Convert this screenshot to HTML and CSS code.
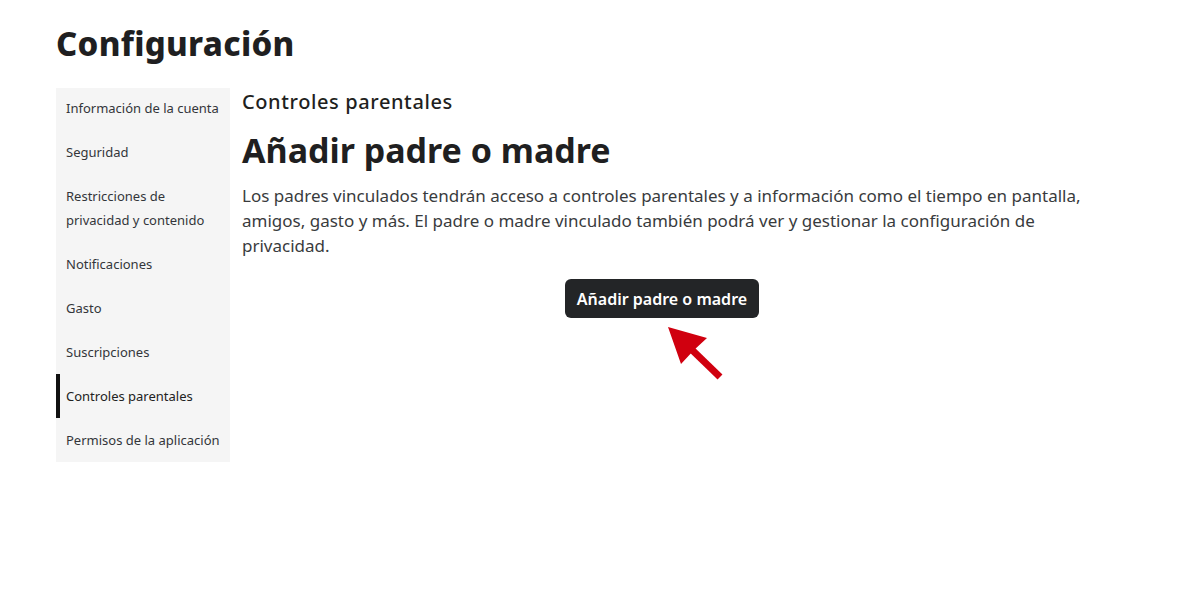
FILE: index.html
```html
<!DOCTYPE html>
<html lang="es">
<head>
    <meta charset="UTF-8">
    <title>Configuración</title>
    <link rel="stylesheet" href="styles.css">
</head>
<body>
    <div class="page">
        <h1 class="page-title">Configuración</h1>

        <div class="settings">
            <ul class="menu">
                <li class="menu-item">Información de la cuenta</li>
                <li class="menu-item">Seguridad</li>
                <li class="menu-item">Restricciones de<br>privacidad y contenido</li>
                <li class="menu-item">Notificaciones</li>
                <li class="menu-item">Gasto</li>
                <li class="menu-item">Suscripciones</li>
                <li class="menu-item active">Controles parentales</li>
                <li class="menu-item">Permisos de la aplicación</li>
            </ul>

            <div class="content">
                <h3 class="section-title">Controles parentales</h3>
                <h2 class="content-title">Añadir padre o madre</h2>
                <p class="content-text">Los padres vinculados tendrán acceso a controles parentales y a información como el tiempo en pantalla, amigos, gasto y más. El padre o madre vinculado también podrá ver y gestionar la configuración de privacidad.</p>
                <div class="actions">
                    <button class="btn-primary">Añadir padre o madre</button>
                    <svg class="arrow" width="60" height="60" viewBox="0 0 60 60">
                        <line x1="54" y1="52" x2="22" y2="21" stroke="#d0000f" stroke-width="7"/>
                        <polygon points="2,2 41,13 28,25 15,39" fill="#d0000f"/>
                    </svg>
                </div>
            </div>
        </div>
    </div>
</body>
</html>
```

FILE: styles.css
```css
* {
    margin: 0;
    padding: 0;
    box-sizing: border-box;
}

body {
    background: #fff;
    font-family: "Noto Sans", "Open Sans", sans-serif;
    color: #393b3d;
}

.page {
    padding: 22px 56px 0;
}

.page-title {
    font-size: 33px;
    font-weight: 800;
    letter-spacing: 0.3px;
    color: #1f1f21;
    line-height: 44px;
    margin-bottom: 20px;
}

.settings {
    display: flex;
    gap: 12px;
    align-items: flex-start;
}

.menu {
    list-style: none;
    width: 174px;
    margin-top: 2px;
    background: #f5f5f5;
}

.menu-item {
    font-size: 13px;
    line-height: 24px;
    white-space: nowrap;
    padding: 10px 10px 10px 6px;
    color: #33353a;
    border-left: 4px solid transparent;
}

.menu-item:first-child {
    padding-top: 8px;
}

.menu-item.active {
    border-left-color: #111;
    color: #222;
}

.content {
    width: 840px;
    padding-top: 2px;
}

.section-title {
    font-size: 20px;
    font-weight: 500;
    letter-spacing: 0.6px;
    color: #1f1f21;
    line-height: 28px;
    margin-bottom: 12px;
}

.content-title {
    font-size: 34px;
    font-weight: 700;
    color: #1f1f21;
    line-height: 44px;
    margin-bottom: 11px;
}

.content-text {
    width: 850px;
    font-size: 17px;
    line-height: 25px;
    color: #393b3d;
}

.actions {
    position: relative;
    display: flex;
    justify-content: center;
    margin-top: 21px;
}

.btn-primary {
    background: #232527;
    color: #fff;
    border: none;
    border-radius: 6px;
    font-family: inherit;
    font-size: 16px;
    font-weight: 600;
    height: 39px;
    padding: 0 12px;
}

.arrow {
    position: absolute;
    left: 424px;
    top: 46px;
}
```
